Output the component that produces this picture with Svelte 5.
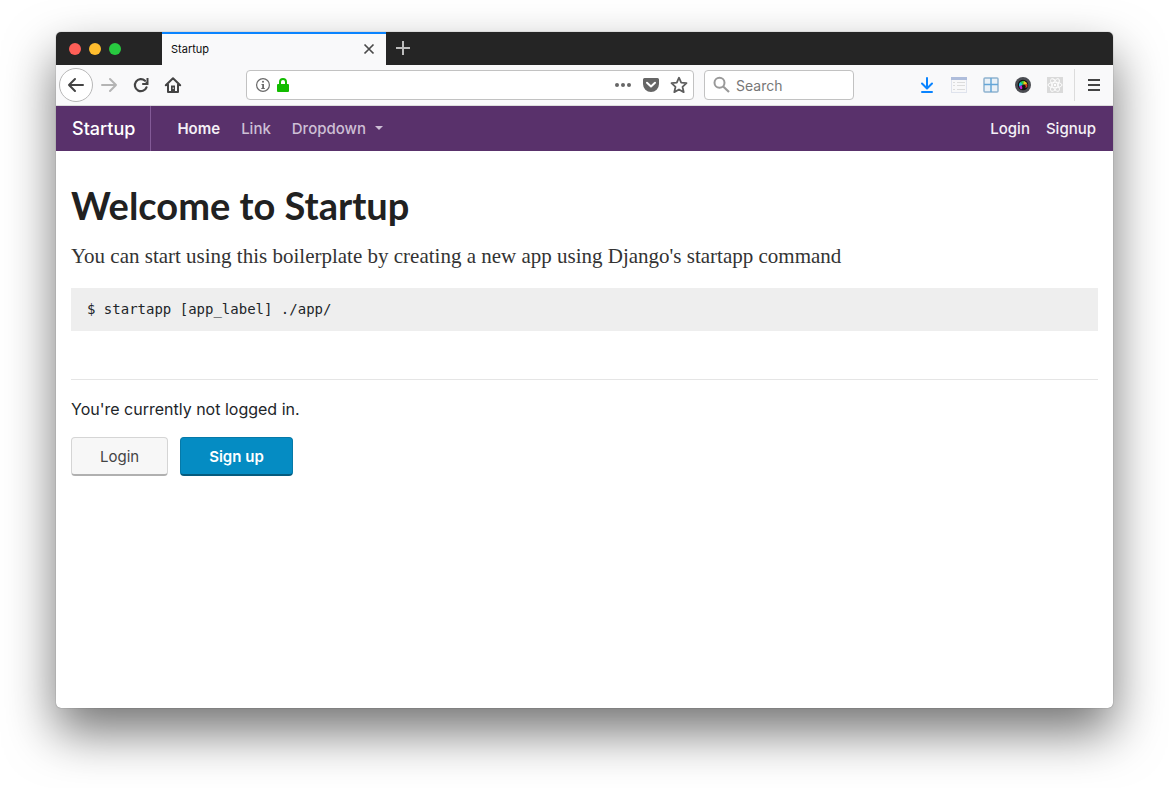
<script>
  let address = $state('');
  let query = $state('');
</script>

<div class="desktop">
  <div class="window">
    <div class="tabbar">
      <div class="lights">
        <button class="light close" aria-label="Close window"></button>
        <button class="light minimise" aria-label="Minimise window"></button>
        <button class="light zoom" aria-label="Zoom window"></button>
      </div>
      <div class="tab">
        <span>Startup</span>
        <button class="plain" aria-label="Close tab">
          <svg width="16" height="16" viewBox="0 0 16 16" fill="none" stroke="#4a4a4a" stroke-width="1.7"><path d="M3.5 3.5l9 9M12.500 3.500l-9 9" /></svg>
        </button>
      </div>
      <button class="plain newtab" aria-label="New tab">
        <svg width="16" height="16" viewBox="0 0 16 16" fill="none" stroke="#bdbdbd" stroke-width="2"><path d="M8 1v14M1 8h14" /></svg>
      </button>
    </div>

    <div class="toolbar">
      <button class="back" aria-label="Back">
        <svg width="18" height="18" viewBox="0 0 18 18" fill="none" stroke="#444" stroke-width="2" stroke-linecap="round" stroke-linejoin="round"><path d="M16 9H2M8 3L2 9l6 6" /></svg>
      </button>
      <button class="tool" aria-label="Forward">
        <svg width="18" height="18" viewBox="0 0 18 18" fill="none" stroke="#b4b4b4" stroke-width="2" stroke-linecap="round" stroke-linejoin="round"><path d="M2 9h14M10 3l6 6-6 6" /></svg>
      </button>
      <button class="tool" aria-label="Reload">
        <svg width="18" height="18" viewBox="0 0 18 18"><path d="M14.500 11.300A6 6 0 1 1 13 4.800" fill="none" stroke="#444" stroke-width="2.200" stroke-linecap="round" /><path d="M16.500 2v6.500a.5.5 0 0 1-.5.5H10.200V7h3L14.500 5.500V2z" fill="#444" /></svg>
      </button>
      <button class="tool" aria-label="Home">
        <svg width="18" height="18" viewBox="0 0 18 18"><path d="M1.800 9.300L9 2.200l7.200 7.100M4 8.500V16h10V8.500" fill="none" stroke="#444" stroke-width="2" stroke-linecap="round" stroke-linejoin="round" /><path d="M7 9.500h4V16H7z" fill="#444" /><path d="M8.700 11.500h1v1.500h-1z" fill="#f9f9fa" /></svg>
      </button>

      <div class="field address">
        <svg width="16" height="16" viewBox="0 0 16 16"><circle cx="8" cy="8" r="6.400" fill="none" stroke="#6a6a6a" stroke-width="1.200" /><circle cx="8" cy="4.700" r="1" fill="#6a6a6a" /><path d="M6.500 7H9v4h.8v1H6.300v-1h.9V8h-.7z" fill="#6a6a6a" /></svg>
        <svg width="16" height="16" viewBox="0 0 16 16"><rect x="2" y="7" width="12" height="8" rx="1" fill="#12bc00" /><path d="M5 8V5a3 3 0 0 1 6 0v3" fill="none" stroke="#12bc00" stroke-width="2" /></svg>
        <input type="text" aria-label="Address" bind:value={address} />
        <button class="plain" aria-label="Page actions">
          <svg width="18" height="16" viewBox="0 0 18 16" fill="#666"><circle cx="3" cy="8" r="2" /><circle cx="9" cy="8" r="2" /><circle cx="15" cy="8" r="2" /></svg>
        </button>
        <button class="plain" aria-label="Save to Pocket">
          <svg width="16" height="16" viewBox="0 0 16 16"><path d="M1.500 1h13A1.500 1.500 0 0 1 16 2.500V7A8 8 0 0 1 0 7V2.500A1.500 1.500 0 0 1 1.500 1z" fill="#666" /><path d="M4 5.700L8 9.500l4-3.800" fill="none" stroke="#fff" stroke-width="2" stroke-linecap="round" stroke-linejoin="round" /></svg>
        </button>
        <button class="plain" aria-label="Bookmark this page">
          <svg width="18" height="18" viewBox="0 0 18 18" fill="none" stroke="#5e5e5e" stroke-width="1.800" stroke-linejoin="round"><path d="M9 1.700l2.200 4.900 5.300.6-4 3.600 1.200 5.300L9 13.500l-4.700 2.600 1.200-5.300-4-3.600 5.300-.6z" /></svg>
        </button>
      </div>

      <div class="field search">
        <svg width="18" height="18" viewBox="0 0 18 18" fill="none" stroke="#999" stroke-width="2"><circle cx="6.500" cy="6.800" r="5" /><path d="M10.200 10.500L16 16" stroke-width="2.200" /></svg>
        <input type="text" aria-label="Search" placeholder="Search" bind:value={query} />
      </div>

      <div class="extensions">
        <button class="tool" aria-label="Downloads">
          <svg width="16" height="18" viewBox="0 0 16 18" fill="none" stroke="#0a84ff" stroke-width="2" stroke-linecap="round" stroke-linejoin="round"><path d="M8 2v10M3 7.500L8 12.500l5-5M3 16h10" /></svg>
        </button>
        <button class="tool" aria-label="Reader list">
          <svg width="16" height="16" viewBox="0 0 16 16"><rect x=".5" y=".5" width="15" height="15" fill="#f8f8f9" stroke="#dfe3ed" /><path d="M0 0h16v3H0z" fill="#afbddb" /><path d="M2 5.500h2M6 5.500h8M2 8.500h2M6 8.500h8M2 12.500h2M6 12.500h8" stroke="#dcdcdc" /></svg>
        </button>
        <button class="tool" aria-label="Grid layout">
          <svg width="16" height="16" viewBox="0 0 16 16"><rect x="1" y="1" width="14" height="14" rx="1" fill="#eaf1f7" stroke="#8fb3cf" stroke-width="1.500" /><path d="M8 1v14M1 7.500h14" stroke="#64a6d8" stroke-width="1.500" /></svg>
        </button>
        <button class="tool" aria-label="Camera">
          <svg width="16" height="16" viewBox="0 0 16 16"><circle cx="8" cy="8" r="8" fill="#4b4d52" /><circle cx="8" cy="8" r="5.200" fill="#111" /><path d="M8 8L4 9.500V6.500L6 4.500z" fill="#12c4dc" /><path d="M8 8L5.500 5 8 3.800l1.500.4z" fill="#30cc3c" /><path d="M8 8l1-4 2.500 1.500.8 2z" fill="#e8cf1e" /><path d="M8 8l4.300-1v2.500L11 11z" fill="#e33b2e" /><path d="M8 8l-4 1.500L5.500 12l1.500.3z" fill="#b822d5" /><circle cx="8.800" cy="9.200" r="1.800" fill="#151515" /></svg>
        </button>
        <button class="tool" aria-label="React tools">
          <svg width="16" height="16" viewBox="0 0 16 16"><path d="M0 0h16v16H0z" fill="#dadada" /><g fill="none" stroke="#fff" stroke-width=".9"><ellipse cx="8" cy="8" rx="7" ry="2.700" /><ellipse cx="8" cy="8" rx="7" ry="2.700" transform="rotate(60 8 8)" /><ellipse cx="8" cy="8" rx="7" ry="2.700" transform="rotate(120 8 8)" /></g><circle cx="8" cy="8" r="1.200" fill="#fff" /></svg>
        </button>
      </div>
      <button class="tool" aria-label="Open menu">
        <svg width="16" height="16" viewBox="0 0 16 16" stroke="#444" stroke-width="2"><path d="M2 3h12M2 8h12M2 13h12" /></svg>
      </button>
    </div>

    <nav class="navbar">
      <a class="brand" href="#home">Startup</a>
      <a class="active" href="#home">Home</a>
      <a href="#link">Link</a>
      <a class="dropdown" href="#dropdown">Dropdown</a>
      <div class="account">
        <a href="#login">Login</a>
        <a href="#signup">Signup</a>
      </div>
    </nav>

    <main>
      <h1>Welcome to Startup</h1>
      <p class="lead">You can start using this boilerplate by creating a new app using Django's startapp command</p>
      <pre><code>$ startapp [app_label] ./app/</code></pre>
      <hr />
      <p class="status">You're currently not logged in.</p>
      <div class="actions">
        <button class="btn">Login</button>
        <button class="btn primary">Sign up</button>
      </div>
    </main>
  </div>
</div>

<style>
  :global(body) {
    margin: 0;
    background: #fff;
  }
  .desktop,
  .desktop * {
    box-sizing: border-box;
  }
  .desktop {
    display: flex;
    min-height: 100vh;
    padding: 32px 56px 80px;
    overflow: hidden;
    font-family: Inter, "Liberation Sans", sans-serif;
    font-size: 16px;
    color: #212529;
  }
  .window {
    display: flex;
    flex: 1;
    flex-direction: column;
    min-width: 0;
    border-radius: 5px;
    background: #fff;
    box-shadow: 0 0 1px rgba(0, 0, 0, 0.6), 0 24px 50px rgba(0, 0, 0, 0.55);
  }
  button,
  input {
    padding: 0;
    border: 0;
    background: none;
    font: inherit;
  }
  svg {
    display: block;
    flex: none;
  }
  .plain {
    display: flex;
    align-items: center;
  }

  .tabbar {
    display: flex;
    height: 33px;
    border-radius: 5px 5px 0 0;
    background: #252525;
  }
  .lights {
    display: flex;
    align-items: center;
    gap: 8px;
    width: 106px;
    padding: 1px 0 0 13px;
  }
  .light {
    width: 12px;
    height: 12px;
    border-radius: 50%;
  }
  .close {
    background: #ff5f57;
  }
  .minimise {
    background: #ffbd2e;
  }
  .zoom {
    background: #28c940;
  }
  .tab {
    display: flex;
    align-items: center;
    justify-content: space-between;
    width: 224px;
    padding: 0 9px 2px;
    border-top: 2px solid #0a84ff;
    background: #f9f9fa;
    font-size: 11px;
    color: #0c0c0d;
  }
  .newtab {
    padding: 0 0 2px 9px;
  }

  .toolbar {
    display: flex;
    align-items: center;
    height: 41px;
    padding: 0 3px;
    border-bottom: 1px solid #dcdcdc;
    background: #f9f9fa;
  }
  .back,
  .tool {
    display: flex;
    flex: none;
    align-items: center;
    justify-content: center;
    width: 32px;
    height: 32px;
  }
  .back {
    width: 34px;
    height: 34px;
    border: 1px solid #b8b8b8;
    border-radius: 50%;
    background: #fff;
  }
  .field {
    display: flex;
    align-items: center;
    height: 30px;
    border: 1px solid #c2c2c2;
    border-radius: 4px;
    background: #fff;
  }
  .field input {
    flex: 1;
    min-width: 0;
    outline: 0;
    font-size: 14px;
  }
  .address {
    flex: 1;
    gap: 4px;
    margin-left: 57px;
    padding: 0 2px 0 8px;
  }
  .address .plain {
    justify-content: center;
    width: 24px;
  }
  .search {
    gap: 5px;
    width: 150px;
    margin: 0 57px 0 10px;
    padding: 0 8px;
  }
  .search input::placeholder {
    color: #777;
    opacity: 1;
  }
  .extensions {
    display: flex;
    margin-right: 3px;
    padding-right: 3px;
    border-right: 1px solid #dcdcdc;
  }

  .navbar {
    display: flex;
    align-items: center;
    height: 45px;
    padding-right: 17px;
    background: #59316b;
    font-size: 15px;
    font-weight: 500;
  }
  .navbar a {
    padding-left: 21px;
    color: #cdbfd5;
    text-decoration: none;
  }
  .navbar .brand {
    display: flex;
    align-items: center;
    height: 100%;
    margin-right: 5px;
    padding: 0 15px 0 16px;
    border-right: 1px solid #835a97;
    font-size: 18px;
    color: #fff;
  }
  .navbar .active {
    font-weight: 600;
    color: #f4eff6;
  }
  .dropdown::after {
    content: "";
    display: inline-block;
    margin-left: 9px;
    border: 4px solid transparent;
    border-top-color: currentColor;
    border-bottom: 0;
    vertical-align: 4px;
  }
  .account {
    display: flex;
    gap: 16px;
    margin-left: auto;
  }
  .navbar .account a {
    padding: 0;
    color: #f4eff6;
  }

  main {
    padding: 30px 15px;
  }
  h1 {
    margin: 0 0 12px;
    font-family: Lato, "Noto Sans", sans-serif;
    font-size: 38px;
    font-weight: 700;
    line-height: 48px;
    color: #212121;
  }
  .lead {
    margin: 0 0 16px;
    font-family: "Liberation Serif", serif;
    font-size: 21px;
    line-height: 31px;
    color: #333;
  }
  pre {
    margin: 0 0 48px;
    padding: 12px 16px;
    background: #eee;
    font-size: 14px;
    line-height: 19px;
  }
  code {
    font-family: "DejaVu Sans Mono", monospace;
  }
  hr {
    margin: 0 0 17px;
    border: 0;
    border-top: 1px solid #e5e5e5;
  }
  .status {
    margin: 0 0 16px;
    line-height: 24px;
  }
  .actions {
    display: flex;
    gap: 12px;
  }
  .btn {
    height: 39px;
    padding: 0 28px;
    border: 1px solid #d5d5d5;
    border-bottom: 2px solid #b0b0b0;
    border-radius: 4px;
    background: #f7f7f7;
    font-size: 15px;
    color: #444;
  }
  .primary {
    border-color: #0679a8;
    border-bottom-color: #055b7e;
    background: #058cc3;
    font-weight: 600;
    color: #fff;
  }
</style>
